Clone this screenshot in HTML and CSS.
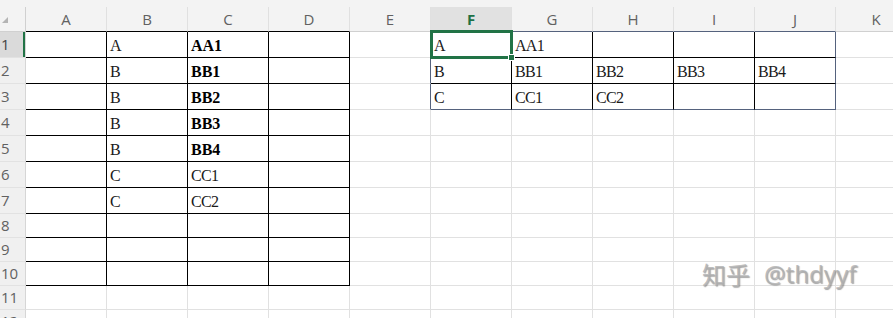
FILE: index.html
```html
<!DOCTYPE html>
<html lang="zh-CN">
<head>
    <meta charset="UTF-8">
    <meta name="viewport" content="width=device-width, initial-scale=1.0">
    <title>Sheet1</title>
    <link rel="stylesheet" href="styles.css">
</head>
<body>
    <div class="app">
        <div class="strip"></div>
        <table class="sheet">
            <colgroup>
                <col class="c-head">
                <col class="c-a">
                <col class="c-n"><col class="c-n"><col class="c-n"><col class="c-n">
                <col class="c-n"><col class="c-n"><col class="c-n"><col class="c-n">
                <col class="c-n"><col class="c-n">
            </colgroup>
            <thead>
                <tr>
                    <th class="corner"><span class="tri"></span></th>
                    <th class="hb">A</th>
                    <th class="hb">B</th>
                    <th class="hb">C</th>
                    <th class="hb">D</th>
                    <th>E</th>
                    <th class="hr sel">F</th>
                    <th class="hr">G</th>
                    <th class="hr">H</th>
                    <th class="hr">I</th>
                    <th class="hr">J</th>
                    <th>K</th>
                </tr>
            </thead>
            <tbody>
                <!-- rows 1-3: both tables -->
                <tr class="tall">
                    <th class="rowhead active">1</th>
                    <td class="bk"></td>
                    <td class="bk">A</td>
                    <td class="bk bold">AA1</td>
                    <td class="bk"></td>
                    <td class="lb"></td>
                    <td class="rt current">A<span class="handle"></span></td>
                    <td class="rt">AA1</td>
                    <td class="rt"></td>
                    <td class="rt"></td>
                    <td class="rt last"></td>
                    <td></td>
                </tr>
                <tr class="tall">
                    <th class="rowhead">2</th>
                    <td class="bk"></td>
                    <td class="bk">B</td>
                    <td class="bk bold">BB1</td>
                    <td class="bk"></td>
                    <td class="lb"></td>
                    <td class="rt">B</td>
                    <td class="rt">BB1</td>
                    <td class="rt">BB2</td>
                    <td class="rt">BB3</td>
                    <td class="rt last">BB4</td>
                    <td></td>
                </tr>
                <tr class="tall">
                    <th class="rowhead">3</th>
                    <td class="bk"></td>
                    <td class="bk">B</td>
                    <td class="bk bold">BB2</td>
                    <td class="bk"></td>
                    <td class="lb"></td>
                    <td class="rt bottom">C</td>
                    <td class="rt bottom">CC1</td>
                    <td class="rt bottom">CC2</td>
                    <td class="rt bottom"></td>
                    <td class="rt bottom last"></td>
                    <td></td>
                </tr>
                <!-- rows 4-7 -->
                <tr class="tall">
                    <th class="rowhead">4</th>
                    <td class="bk"></td>
                    <td class="bk">B</td>
                    <td class="bk bold">BB3</td>
                    <td class="bk"></td>
                    <td></td><td></td><td></td><td></td><td></td><td></td><td></td>
                </tr>
                <tr class="tall">
                    <th class="rowhead">5</th>
                    <td class="bk"></td>
                    <td class="bk">B</td>
                    <td class="bk bold">BB4</td>
                    <td class="bk"></td>
                    <td></td><td></td><td></td><td></td><td></td><td></td><td></td>
                </tr>
                <tr class="tall">
                    <th class="rowhead">6</th>
                    <td class="bk"></td>
                    <td class="bk">C</td>
                    <td class="bk">CC1</td>
                    <td class="bk"></td>
                    <td></td><td></td><td></td><td></td><td></td><td></td><td></td>
                </tr>
                <tr class="tall">
                    <th class="rowhead">7</th>
                    <td class="bk"></td>
                    <td class="bk">C</td>
                    <td class="bk">CC2</td>
                    <td class="bk"></td>
                    <td></td><td></td><td></td><td></td><td></td><td></td><td></td>
                </tr>
                <!-- rows 8-12 -->
                <tr>
                    <th class="rowhead">8</th>
                    <td class="bk"></td><td class="bk"></td><td class="bk"></td><td class="bk"></td>
                    <td></td><td></td><td></td><td></td><td></td><td></td><td></td>
                </tr>
                <tr>
                    <th class="rowhead">9</th>
                    <td class="bk"></td><td class="bk"></td><td class="bk"></td><td class="bk"></td>
                    <td></td><td></td><td></td><td></td><td></td><td></td><td></td>
                </tr>
                <tr>
                    <th class="rowhead">10</th>
                    <td class="bk"></td><td class="bk"></td><td class="bk"></td><td class="bk"></td>
                    <td></td><td></td><td></td><td></td><td></td><td></td><td></td>
                </tr>
                <tr>
                    <th class="rowhead">11</th>
                    <td></td><td></td><td></td><td></td>
                    <td></td><td></td><td></td><td></td><td></td><td></td><td></td>
                </tr>
                <tr>
                    <th class="rowhead">12</th>
                    <td></td><td></td><td></td><td></td>
                    <td></td><td></td><td></td><td></td><td></td><td></td><td></td>
                </tr>
            </tbody>
        </table>
        <div class="watermark"><span class="zh">知乎</span><span>@thdyyf</span></div>
    </div>
</body>
</html>
```

FILE: styles.css
```css
body {
    margin: 0;
    background: #fff;
    overflow: hidden;
}

.app {
    position: relative;
    width: 893px;
    height: 318px;
    overflow: hidden;
}

.strip {
    height: 7px;
    background-color: #f3f3f3;
}

.sheet {
    border-collapse: separate;
    border-spacing: 0;
    table-layout: fixed;
    width: 916px;
}

.c-head { width: 26px; }
.c-a { width: 81px; }
.c-n { width: 81px; }

/* column headers */
.sheet thead th {
    height: 24px;
    padding: 0;
    background-color: #f3f3f3;
    border-right: 1px solid #e0e0e0;
    border-bottom: 1px solid #d0d0d0;
    font-family: "Open Sans", "Noto Sans", sans-serif;
    font-size: 15px;
    font-weight: normal;
    color: #616161;
    text-align: center;
    vertical-align: middle;
}

.sheet thead th.hb {
    border-bottom-color: #000;
}

.sheet thead th.hr {
    border-bottom-color: #55627d;
}

.sheet thead th.sel {
    background-color: #e1e1e1;
    color: #1e7145;
    font-weight: bold;
}

.sheet thead th.corner {
    position: relative;
    border-right-color: #d0d0d0;
}

.tri {
    position: absolute;
    left: 2px;
    bottom: 8px;
    width: 0;
    height: 0;
    border-left: 6px solid transparent;
    border-bottom: 6px solid #b4b4b4;
}

/* row headers */
.rowhead {
    padding: 0 0 0 1px;
    background-color: #f0f0f0;
    border-right: 1px solid #d6d6d6;
    border-bottom: 1px solid #e2e2e2;
    font-family: "Open Sans", "Noto Sans", sans-serif;
    font-size: 15px;
    font-weight: normal;
    color: #616161;
    text-align: left;
    vertical-align: middle;
    line-height: 15px;
}

.rowhead.active {
    background-color: #dadada;
    box-shadow: inset -2px 0 0 #217346;
    color: #444;
}

/* cells */
.sheet td {
    padding: 0 3px 3px 3px;
    border-right: 1px solid #e1e1e1;
    border-bottom: 1px solid #e1e1e1;
    font-family: "Liberation Serif", "Times New Roman", serif;
    font-size: 16px;
    letter-spacing: -0.7px;
    color: #1a1a1a;
    vertical-align: bottom;
    white-space: nowrap;
    line-height: 16px;
}

.sheet tr.tall td,
.sheet tr.tall th {
    height: 26px;
    box-sizing: border-box;
}

.sheet tbody tr:not(.tall) td,
.sheet tbody tr:not(.tall) th {
    height: 24px;
    box-sizing: border-box;
}

.sheet td.bk {
    border-right-color: #000;
    border-bottom-color: #000;
}

.sheet td.bold {
    font-weight: bold;
    font-size: 16px;
    letter-spacing: 0;
    color: #000;
}

.sheet td.lb {
    border-right-color: #55627d;
}

.sheet td.rt {
    border-right-color: #000;
    border-bottom-color: #000;
}

.sheet td.rt.last {
    border-right-color: #55627d;
}

.sheet td.rt.bottom {
    border-bottom-color: #55627d;
}

/* active cell */
.sheet td.current {
    position: relative;
}

.sheet td.current::after {
    content: "";
    position: absolute;
    top: -2px;
    left: -1px;
    right: -2px;
    bottom: -2px;
    border: 3px solid #217346;
    z-index: 1;
}

.handle {
    position: absolute;
    right: -4px;
    bottom: -4px;
    width: 5px;
    height: 5px;
    background-color: #217346;
    border: 1px solid #fff;
    z-index: 2;
}

.watermark {
    position: absolute;
    left: 702px;
    top: 259px;
    display: flex;
    gap: 14px;
    font-family: "Noto Sans", sans-serif;
    font-size: 24px;
    line-height: 30px;
    color: rgba(175, 175, 175, 0.8);
    text-shadow: 1px 1px 1px rgba(60, 60, 60, 0.45);
}

.watermark .zh {
    font-family: "Noto Sans CJK SC", sans-serif;
}
```
